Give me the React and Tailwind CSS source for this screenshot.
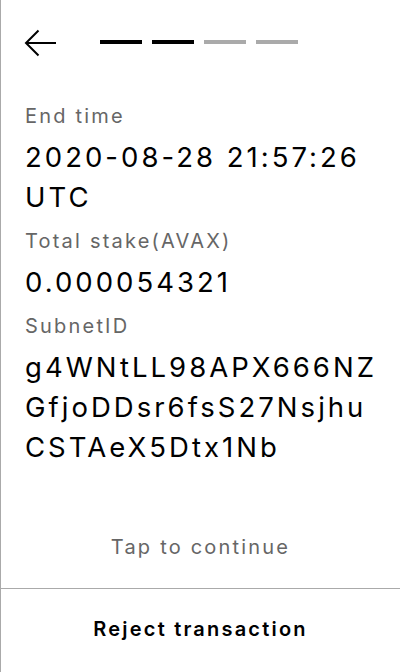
export default function App() {
  return (
    <div
      className="w-[400px] h-[672px] bg-white flex flex-col border-l border-[#aaaaaa] overflow-hidden"
      style={{ fontFamily: "Inter, 'Noto Sans', sans-serif" }}
    >
      <div className="flex items-start h-[86px] pl-[23px] pt-[29px]">
        <svg width="33" height="28" viewBox="0 0 33 28" fill="none" stroke="#000" strokeWidth="2" className="block shrink-0">
          <path d="M32 14H2" />
          <path d="M14.5 1.5L2 14L14.5 26.5" />
        </svg>
        <div className="flex gap-[10px] ml-[43px] mt-[11px]">
          <div className="w-[42px] h-[4px] bg-black" />
          <div className="w-[42px] h-[4px] bg-black" />
          <div className="w-[42px] h-[4px] bg-[#aaaaaa]" />
          <div className="w-[42px] h-[4px] bg-[#aaaaaa]" />
        </div>
      </div>
      <div className="flex flex-col gap-[10px] px-[24px] pt-[16px] flex-1">
        <div className="flex flex-col">
          <div className="text-[20px] leading-[28px] tracking-[0.11em] text-[#666666]">End time</div>
          <div className="text-[27.5px] leading-[40px] tracking-[0.11em] text-black mt-[7px]">2020-08-28 21:57:26<br />UTC</div>
        </div>
        <div className="flex flex-col">
          <div className="text-[20px] leading-[28px] tracking-[0.11em] text-[#666666]">Total stake(AVAX)</div>
          <div className="text-[27.5px] leading-[40px] tracking-[0.11em] text-black mt-[7px]">0.000054321</div>
        </div>
        <div className="flex flex-col">
          <div className="text-[20px] leading-[28px] tracking-[0.11em] text-[#666666]">SubnetID</div>
          <div className="text-[27.5px] leading-[40px] tracking-[0.11em] text-black mt-[7px] whitespace-nowrap">
            <div>g4WNtLL98APX666NZ</div>
            <div>GfjoDDsr6fsS27Nsjhu</div>
            <div>CSTAeX5Dtx1Nb</div>
          </div>
        </div>
      </div>
      <div className="text-center text-[20px] text-[#666666] leading-[28px] pb-[27px] tracking-[0.11em]">Tap to continue</div>
      <div className="border-t border-[#aaaaaa] h-[84px] pb-[4px] flex items-center justify-center">
        <div className="text-[20px] leading-[28px] font-semibold text-black tracking-[0.11em]">Reject transaction</div>
      </div>
    </div>
  );
}
